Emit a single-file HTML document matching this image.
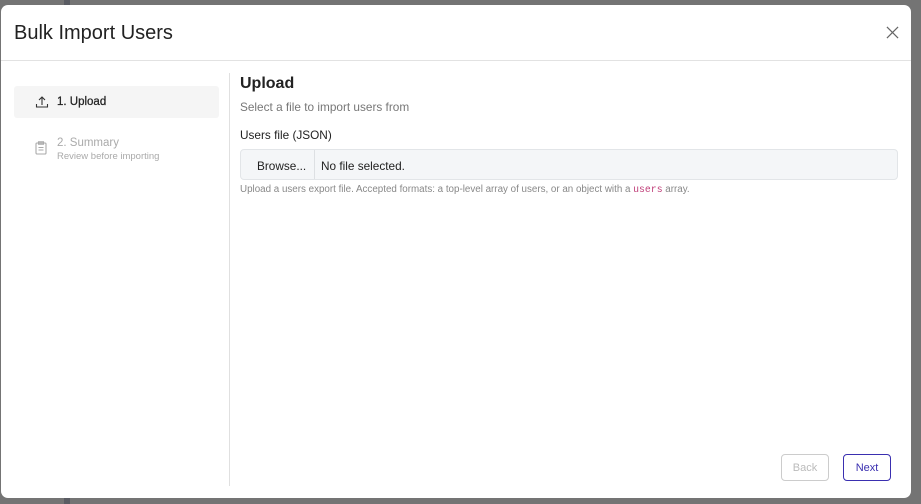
<!DOCTYPE html>
<html><head><style>
*{box-sizing:border-box;margin:0;padding:0}
body{width:921px;height:504px;background:#747474;font-family:"Liberation Sans",sans-serif;position:relative;overflow:hidden}
.dk{position:absolute;left:64px;width:6px;top:0;height:504px;background:#5a5c63}
.m{position:absolute;left:1px;top:5px;width:910px;height:493px;background:#fff;border-radius:7px}
.h{height:56px;border-bottom:1px solid #e2e2e2;position:relative}
.h h1{font-weight:normal;font-size:20px;color:#222;position:absolute;left:13px;top:17px}
.x{position:absolute;left:885px;top:21px}
.side{position:absolute;left:13px;top:81px;width:205px}
.s1{height:32px;background:#f5f5f5;border-radius:3px;font-size:11.5px;color:#222;padding:10px 0 0 43px;position:relative;-webkit-text-stroke:0.25px #222}
.s2{font-size:11.5px;color:#aaa;padding:51px 0 0 43px;position:absolute;top:0;left:0}
.s2 small{display:block;font-size:9.5px;margin-top:2px}
.vl{position:absolute;left:228px;top:68px;width:1px;height:413px;background:#e0e0e0}
.c{position:absolute;left:239px;top:69px;width:658px}
.c h2{font-size:16px;color:#222;font-weight:bold;margin-top:1px}
.sub{font-size:11.8px;color:#777;margin-top:7px}
.lab{font-size:11.8px;color:#222;margin-top:14px}
.in{margin-top:7px;height:31px;border:1px solid #e2e5e8;border-radius:4px;background:#f4f6f8;display:flex;font-size:11.8px;color:#222}
.in .b{width:74px;border-right:1px solid #dde0e3;padding:9px 0 0 16px}
.in .t{padding:9px 0 0 6px}
.hint{font-size:9.8px;color:#888;margin-top:4px}
.hint code{font-family:"Liberation Mono",monospace;color:#c0407a}
.btn{position:absolute;top:449px;width:48px;height:27px;border-radius:4px;font-size:11px;text-align:center;line-height:26px}
</style></head><body>
<div class="dk"></div>
<div class="m">
<div class="h"><h1>Bulk Import Users</h1>
<svg class="x" width="13" height="13" viewBox="0 0 14 14"><path d="M1 1L13 13M13 1L1 13" stroke="#666" stroke-width="1.3"/></svg></div>
<div class="side">
<div class="s1"><svg style="position:absolute;left:21px;top:9px" width="14" height="14" viewBox="0 0 14 14" fill="none" stroke="#333" stroke-width="1.1"><path d="M7 10V2M4 5L7 2L10 5M1.5 9v3h11V9"/></svg>1. Upload</div>
<div class="s2"><svg style="position:absolute;left:21px;top:55px" width="12" height="14" viewBox="0 0 12 14" fill="none" stroke="#aaa" stroke-width="1.1"><rect x="1" y="2" width="10" height="11" rx="1"/><rect x="3.5" y="0.8" width="5" height="2.4"/><path d="M3.5 6.5h5M3.5 9h5"/></svg>2. Summary<small>Review before importing</small></div>
</div>
<div class="vl"></div>
<div class="c">
<h2>Upload</h2>
<div class="sub">Select a file to import users from</div>
<div class="lab">Users file (JSON)</div>
<div class="in"><div class="b">Browse...</div><div class="t">No file selected.</div></div>
<div class="hint">Upload a users export file. Accepted formats: a top-level array of users, or an object with a <code>users</code> array.</div>
</div>
<div class="btn" style="left:780px;border:1px solid #ccc;color:#bbb">Back</div>
<div class="btn" style="left:842px;border:1px solid #3a2fb0;color:#3a2fb0">Next</div>
</div>
</body></html>
